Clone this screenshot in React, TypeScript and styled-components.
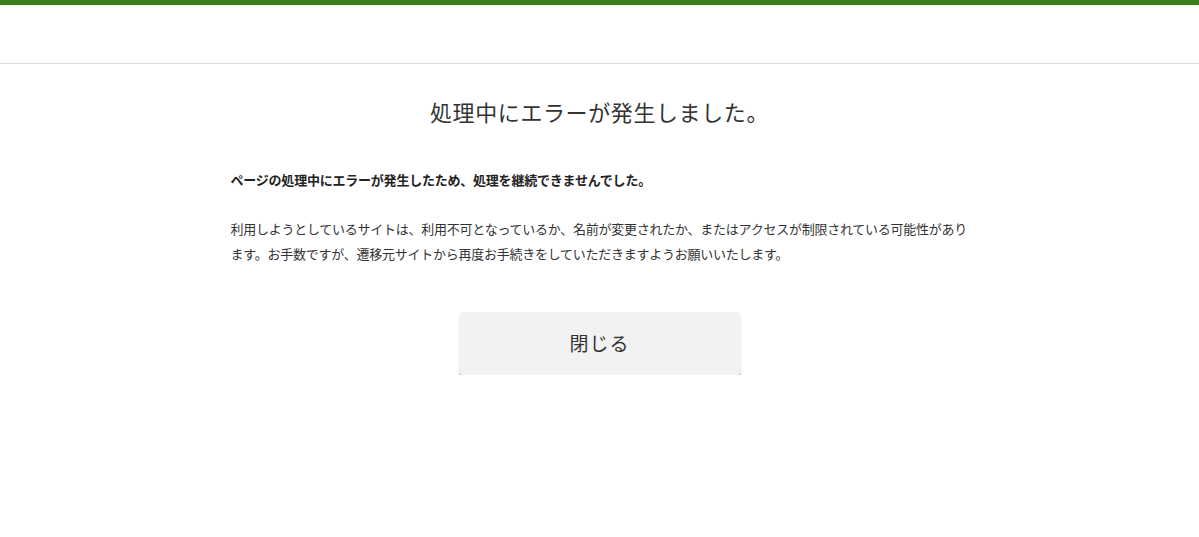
import React from "react";
import styled, { createGlobalStyle } from "styled-components";

const GlobalStyle = createGlobalStyle`
  html, body {
    margin: 0;
    padding: 0;
    background: #ffffff;
  }
  body {
    font-family: "Noto Sans CJK JP", "Noto Sans", sans-serif;
    color: #333333;
  }
`;

const Header = styled.header`
  height: 58px;
  border-top: 5px solid #3b7d1f;
  border-bottom: 1px solid #dddddd;
  background: #ffffff;
`;

const Main = styled.main`
  width: 738px;
  margin: 0 auto;
  padding-top: 29px;
  display: flex;
  flex-direction: column;
`;

const Title = styled.h1`
  margin: 0;
  font-size: 22px;
  letter-spacing: 0.6px;
  font-weight: 400;
  line-height: 36px;
  text-align: center;
  color: #333333;
`;

const Lead = styled.p`
  margin: 38px 0 0;
  font-size: 13px;
  letter-spacing: -0.22px;
  font-weight: 700;
  line-height: 25px;
  color: #222222;
`;

const Body = styled.p`
  margin: 24px 0 0;
  font-size: 13px;
  letter-spacing: -0.25px;
  font-weight: 400;
  line-height: 25px;
  color: #333333;
`;

const Actions = styled.div`
  display: flex;
  justify-content: center;
  margin-top: 46px;
`;

const CloseButton = styled.button`
  width: 282px;
  height: 63px;
  border: none;
  border-radius: 4px;
  background: #f2f2f2;
  box-shadow: 0 2px 1px rgba(0, 0, 0, 0.28);
  font-family: "Noto Sans CJK JP", "Noto Sans", sans-serif;
  font-size: 19px;
  color: #333333;
  letter-spacing: 1px;
  padding: 0 0 2px;
  cursor: pointer;
`;

export default function App() {
  return (
    <>
      <GlobalStyle />
      <Header />
      <Main>
        <Title>処理中にエラーが発生しました。</Title>
        <Lead>ページの処理中にエラーが発生したため、処理を継続できませんでした。</Lead>
        <Body>
          利用しようとしているサイトは、利用不可となっているか、名前が変更されたか、またはアクセスが制限されている可能性があります。お手数ですが、遷移元サイトから再度お手続きをしていただきますようお願いいたします。
        </Body>
        <Actions>
          <CloseButton type="button">閉じる</CloseButton>
        </Actions>
      </Main>
    </>
  );
}
